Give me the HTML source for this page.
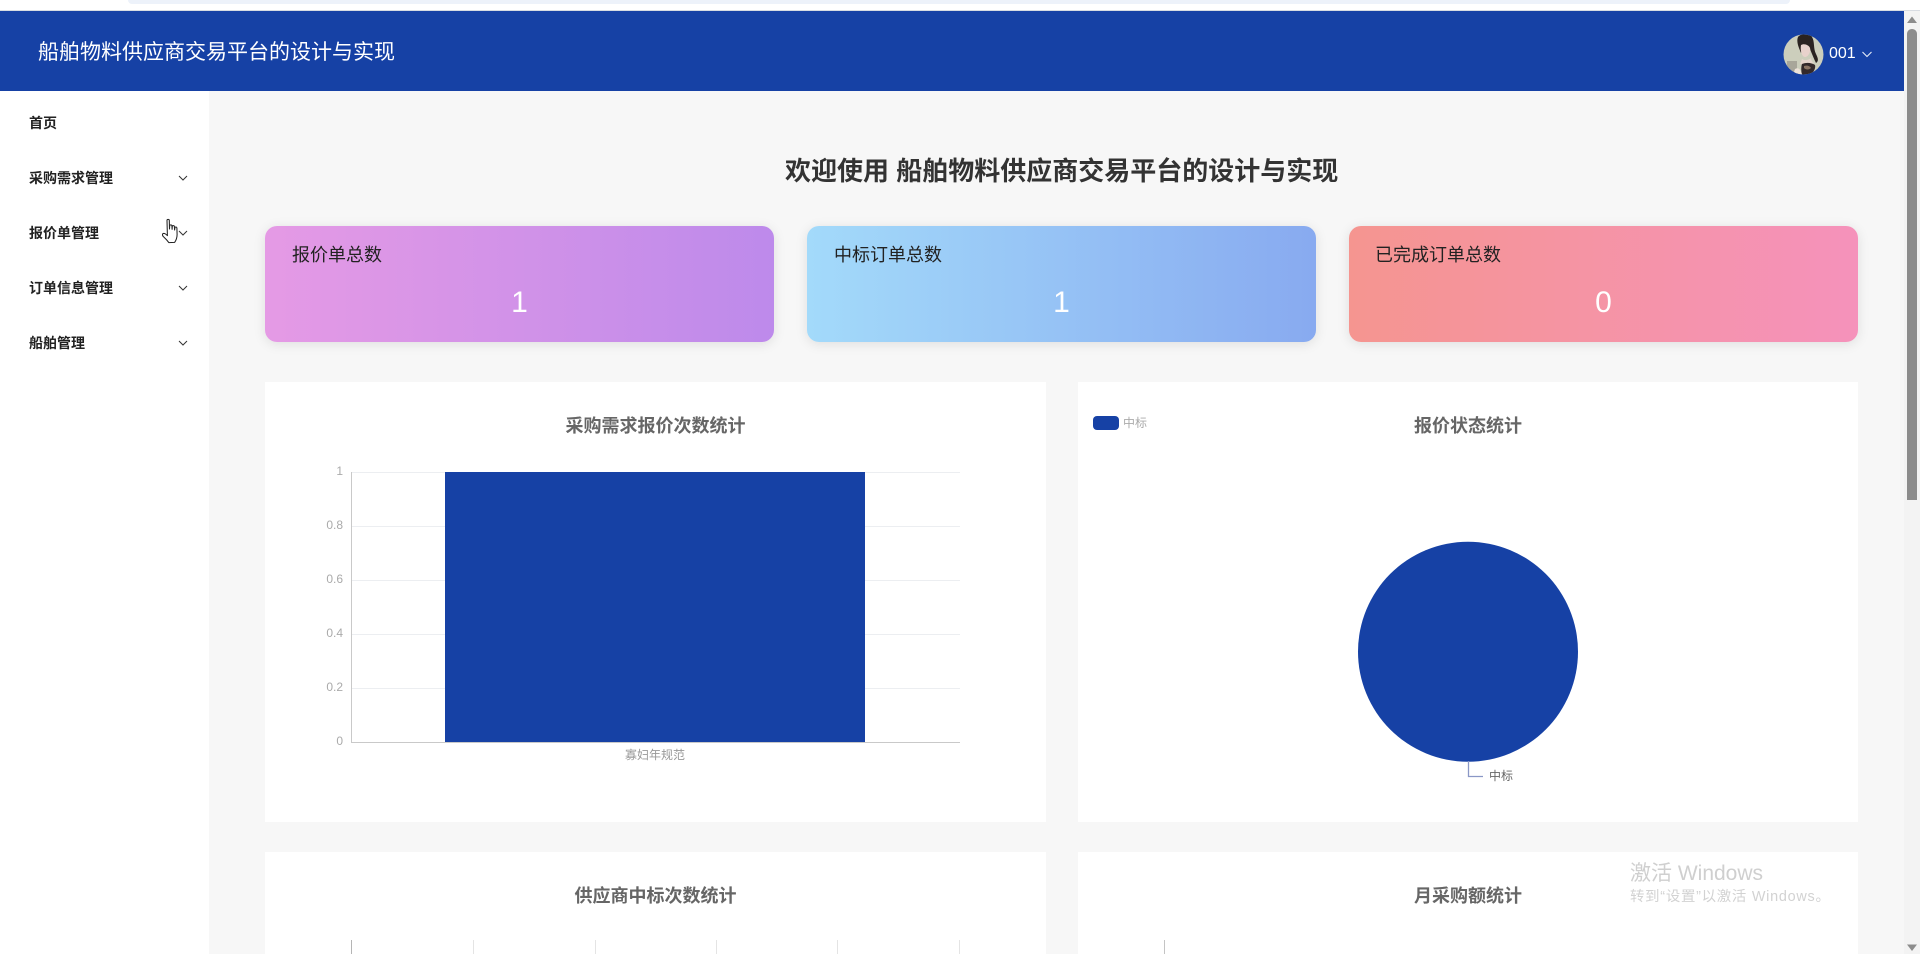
<!DOCTYPE html>
<html lang="zh-CN">
<head>
<meta charset="utf-8">
<title>船舶物料供应商交易平台的设计与实现</title>
<style>
html,body{margin:0;padding:0;width:1920px;height:954px;overflow:hidden;background:#f7f7f7;font-family:"Liberation Sans","Noto Sans CJK SC",sans-serif;}
.a{position:absolute;white-space:nowrap;}
#top{left:0;top:0;width:1920px;height:10px;background:#fff;border-bottom:1px solid #d8dce2;}
#bar{left:128px;top:0;width:1662px;height:4px;background:#edf2fa;border-radius:0 0 8px 8px;}
#hdr{left:0;top:11px;width:1904px;height:80px;background:#1641a5;}
#title{left:38px;top:38px;height:30px;line-height:30px;font-size:21px;color:#fff;}
#side{left:0;top:91px;width:209px;height:863px;background:#fff;}
.m{left:29px;height:20px;line-height:20px;font-size:14px;font-weight:700;color:#222;}
.card{top:226px;height:116px;border-radius:12px;box-shadow:0 2px 12px rgba(0,0,0,.1);}
.lb{left:27px;top:16px;height:26px;line-height:26px;font-size:18px;color:#222;}
.num{left:0;width:100%;top:59px;height:36px;line-height:36px;text-align:center;font-size:30px;color:#fff;}
.panel{background:#fff;}
.ct{height:26px;line-height:26px;font-size:18px;font-weight:700;color:#666;text-align:center;}
.yl{width:50px;left:293px;height:14px;line-height:14px;text-align:right;font-size:12px;color:#aaa;}
#wm1{left:1630px;top:861px;height:26px;line-height:26px;font-size:21px;color:#cfcfcf;}
#wm2{left:1630px;top:887px;height:20px;line-height:20px;font-size:14.4px;letter-spacing:.75px;color:#d2d2d2;}
</style>
</head>
<body>
<div class="a" id="top"></div>
<div class="a" id="bar"></div>
<div class="a" id="hdr"></div>
<div class="a" id="title">船舶物料供应商交易平台的设计与实现</div>

<svg class="a" style="left:1783px;top:34px" width="41" height="41" viewBox="0 0 41 41">
  <defs><clipPath id="av"><circle cx="20.5" cy="20.5" r="20"/></clipPath></defs>
  <g clip-path="url(#av)">
    <rect width="41" height="41" fill="#ccceBC"/>
    <rect x="4" y="27" width="10" height="14" fill="#a8a69a"/>
    <path d="M15 3C18-1 27-1 29 3C32 8 30 14 33 20C35 24 36 27 33 29C31 25 29 20 27 15C23 13 19 15 18 19C16 14 13 8 15 3Z" fill="#2a2321"/>
    <path d="M18 11C21 9 26 11 27 14C28 18 25 23 22 23C19 23 17 17 18 11Z" fill="#e8d2cc"/>
    <path d="M19 25C22 27 26 26 28 24C28 26 29 28 31 29L24 31L17 30Z" fill="#e5d5cc"/>
    <path d="M19 30C24 28 29 29 32 31C33 35 30 39 26 41L19 41C18 37 18 33 19 30Z" fill="#33292a"/>
    <path d="M21 32C24 31 27 32 28 34C26 36 23 36 21 34Z" fill="#8b7565"/>
    <path d="M12 35C15 33 18 35 19 41L10 41Z" fill="#ece2d8"/>
  </g>
</svg>
<div class="a" style="left:1829px;top:44px;height:20px;line-height:20px;font-size:16px;color:#fff;">001</div>
<svg class="a" style="left:1861px;top:49px" width="12" height="10" viewBox="0 0 12 10"><path d="M1.5 3L6 7.5L10.5 3" fill="none" stroke="#e8edf8" stroke-width="1.1"/></svg>

<div class="a" id="side"></div>
<div class="a m" style="top:113px">首页</div>
<div class="a m" style="top:168px">采购需求管理</div>
<div class="a m" style="top:223px">报价单管理</div>
<div class="a m" style="top:278px">订单信息管理</div>
<div class="a m" style="top:333px">船舶管理</div>
<svg class="a" style="left:177px;top:173px" width="12" height="10" viewBox="0 0 12 10"><path d="M2 3L6 7L10 3" fill="none" stroke="#333" stroke-width="1"/></svg>
<svg class="a" style="left:177px;top:228px" width="12" height="10" viewBox="0 0 12 10"><path d="M2 3L6 7L10 3" fill="none" stroke="#333" stroke-width="1"/></svg>
<svg class="a" style="left:177px;top:283px" width="12" height="10" viewBox="0 0 12 10"><path d="M2 3L6 7L10 3" fill="none" stroke="#333" stroke-width="1"/></svg>
<svg class="a" style="left:177px;top:338px" width="12" height="10" viewBox="0 0 12 10"><path d="M2 3L6 7L10 3" fill="none" stroke="#333" stroke-width="1"/></svg>
<svg class="a" style="left:161px;top:218px" width="20" height="26" viewBox="0 0 20 26">
  <path d="M6 2.5C6 1 8.3 1 8.3 2.5L8.5 11L8.7 7.8C8.8 6.6 10.8 6.6 10.9 7.8L11.1 11.3L11.3 8.4C11.4 7.3 13.3 7.3 13.4 8.5L13.6 12L13.9 9.7C14 8.7 15.8 8.8 15.9 10L16.1 16.5C16.1 20 14.6 23 13.6 24.4L7.8 24.6C6.4 22.6 4.6 20.6 2.4 18.6C1 17.2 1.2 15.5 2.8 15.4C4 15.4 5.2 16.4 6.4 17.6Z" fill="#fff" stroke="#222" stroke-width="1.05" stroke-linejoin="round"/>
</svg>

<div class="a" style="left:785px;top:155px;height:32px;line-height:32px;font-size:26px;font-weight:700;color:#333;">欢迎使用 船舶物料供应商交易平台的设计与实现</div>

<div class="a card" style="left:265px;width:509px;background:linear-gradient(90deg,#e59ae5,#bd8aeb)">
  <div class="a lb">报价单总数</div><div class="a num">1</div>
</div>
<div class="a card" style="left:807px;width:509px;background:linear-gradient(90deg,#a3dafa,#88aaf0)">
  <div class="a lb">中标订单总数</div><div class="a num">1</div>
</div>
<div class="a card" style="left:1349px;width:509px;background:linear-gradient(90deg,#f59590,#f592bb)">
  <div class="a lb" style="left:26px">已完成订单总数</div><div class="a num">0</div>
</div>

<div class="a panel" style="left:265px;top:382px;width:781px;height:440px"></div>
<div class="a panel" style="left:1078px;top:382px;width:780px;height:440px"></div>
<div class="a panel" style="left:265px;top:852px;width:781px;height:102px"></div>
<div class="a panel" style="left:1078px;top:852px;width:780px;height:102px"></div>

<div class="a ct" style="left:265px;width:781px;top:413px">采购需求报价次数统计</div>
<div class="a ct" style="left:1078px;width:780px;top:413px">报价状态统计</div>
<div class="a ct" style="left:265px;width:781px;top:883px">供应商中标次数统计</div>
<div class="a ct" style="left:1078px;width:780px;top:883px">月采购额统计</div>

<svg class="a" style="left:340px;top:460px" width="640" height="300" viewBox="340 460 640 300">
  <g stroke="#eceef1" stroke-width="1">
    <path d="M352 472.5H960M352 526.5H960M352 580.5H960M352 634.5H960M352 688.5H960"/>
  </g>
  <path d="M351.5 472V742.5H960" fill="none" stroke="#c9c9c9" stroke-width="1"/>
  <rect x="445" y="472" width="420" height="270" fill="#1641a5"/>
</svg>
<div class="a yl" style="top:464px">1</div>
<div class="a yl" style="top:518px">0.8</div>
<div class="a yl" style="top:572px">0.6</div>
<div class="a yl" style="top:626px">0.4</div>
<div class="a yl" style="top:680px">0.2</div>
<div class="a yl" style="top:734px">0</div>
<div class="a" style="left:625px;width:60px;top:747px;height:16px;line-height:16px;text-align:center;font-size:12px;color:#999;">寡妇年规范</div>

<div class="a" style="left:1093px;top:416px;width:26px;height:14px;border-radius:4px;background:#1641a5"></div>
<div class="a" style="left:1123px;top:415px;height:16px;line-height:16px;font-size:12px;color:#aaa;">中标</div>
<svg class="a" style="left:1340px;top:530px" width="260" height="260" viewBox="1340 530 260 260">
  <circle cx="1468" cy="651.7" r="110" fill="#1641a5"/>
  <path d="M1468.5 761V776.5H1483" fill="none" stroke="#8a97c6" stroke-width="1.3"/>
</svg>
<div class="a" style="left:1489px;top:768px;height:16px;line-height:16px;font-size:12px;color:#666;">中标</div>

<svg class="a" style="left:340px;top:938px" width="900" height="16" viewBox="340 938 900 16">
  <path d="M351.5 940V954" stroke="#b5b5b5"/>
  <path d="M473.5 940V954M595.5 940V954M716.5 940V954M837.5 940V954M959.5 940V954" stroke="#e4e4e4"/>
  <path d="M1164.5 940V954" stroke="#c4c4c4"/>
</svg>

<div class="a" id="wm1">激活 Windows</div>
<div class="a" id="wm2">转到“设置”以激活 Windows。</div>

<div class="a" style="left:1904px;top:11px;width:16px;height:943px;background:#f3f3f3"></div>
<svg class="a" style="left:1904px;top:11px" width="16" height="943" viewBox="0 0 16 943">
  <path d="M8 5.5L13 12H3Z" fill="#8c8c8c"/>
  <path d="M3 23C3 20 5.3 18 8 18C10.7 18 13 20 13 23V489H3Z" fill="#8c8c8c"/>
  <path d="M8 940L3 933.5H13Z" fill="#8c8c8c"/>
</svg>
</body>
</html>
